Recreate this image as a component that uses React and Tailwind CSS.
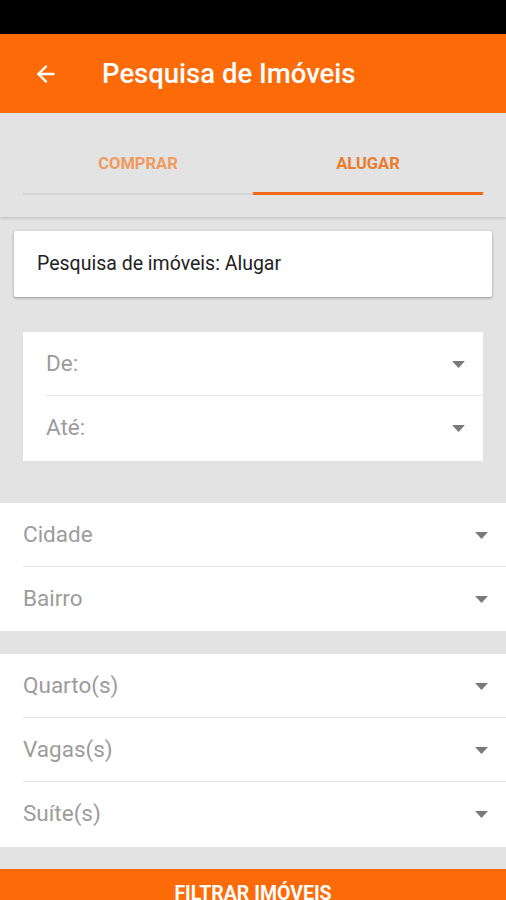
import { ArrowLeft } from 'lucide-react';

const Caret = () => (
  <svg width="13" height="7" viewBox="0 0 13 7" className="shrink-0">
    <path d="M0 0 H13 L6.5 7 Z" fill="#7a7a7a" />
  </svg>
);

const SelectRow = ({ label, divider }) => (
  <div className="relative h-[64px] flex items-center justify-between pr-[18px]">
    <span className="text-[22.5px] text-[#9c9c9c]">{label}</span>
    <Caret />
    {divider && <div className="absolute bottom-0 left-0 right-0 h-px bg-[#e4e4e4]" />}
  </div>
);

const App = () => {
  return (
    <div className="w-[506px] h-[900px] overflow-hidden bg-[#e3e3e3] font-['Roboto',sans-serif] flex flex-col">
      {/* status bar */}
      <div className="h-[34px] bg-black shrink-0" />

      {/* toolbar */}
      <div className="h-[79px] bg-[#fd6a08] flex items-center shrink-0">
        <ArrowLeft className="ml-[33px] text-white" size={26} strokeWidth={2.2} />
        <h1 className="ml-[43px] text-[27.5px] font-medium text-white">Pesquisa de Imóveis</h1>
      </div>

      {/* tabs */}
      <div className="h-[104px] shrink-0 px-[23px] pt-[37px] shadow-[0_2px_2px_rgba(0,0,0,0.12)] relative z-10 bg-[#e3e3e3]">
        <div className="flex">
          <div className="flex-1 flex flex-col items-center">
            <span className="h-[28px] text-[16.5px] font-bold text-[#ef9a5f] leading-[28px]">COMPRAR</span>
            <div className="mt-[14px] w-full h-[3px] flex items-end">
              <div className="w-full h-[2px] bg-[#d4d4d4]" />
            </div>
          </div>
          <div className="flex-1 flex flex-col items-center">
            <span className="h-[28px] text-[16.5px] font-bold text-[#ec7b2c] leading-[28px]">ALUGAR</span>
            <div className="mt-[14px] w-full h-[3px] bg-[#f06a1c]" />
          </div>
        </div>
      </div>

      {/* title card */}
      <div className="mx-[14px] mt-[14px] h-[66px] bg-white rounded-[2px] shadow-[0_1px_3px_rgba(0,0,0,0.35)] flex items-center pl-[23px] shrink-0">
        <span className="text-[19.5px] text-[#222]">Pesquisa de imóveis: Alugar</span>
      </div>

      {/* price range */}
      <div className="mx-[23px] mt-[35px] bg-white pl-[23px] pb-px shrink-0">
        <SelectRow label="De:" divider />
        <SelectRow label="Até:" />
      </div>

      {/* location */}
      <div className="mt-[42px] bg-white pl-[23px] shrink-0">
        <SelectRow label="Cidade" divider />
        <SelectRow label="Bairro" />
      </div>

      {/* rooms */}
      <div className="mt-[23px] bg-white pl-[23px] pb-px shrink-0">
        <SelectRow label="Quarto(s)" divider />
        <SelectRow label="Vagas(s)" divider />
        <SelectRow label="Suíte(s)" />
      </div>

      {/* button */}
      <button className="mt-[22px] h-[48px] w-full bg-[#fd6a08] text-white text-[19.5px] font-bold flex items-start justify-center pt-[10px] shrink-0">
        FILTRAR IMÓVEIS
      </button>
    </div>
  );
};

export default App;
